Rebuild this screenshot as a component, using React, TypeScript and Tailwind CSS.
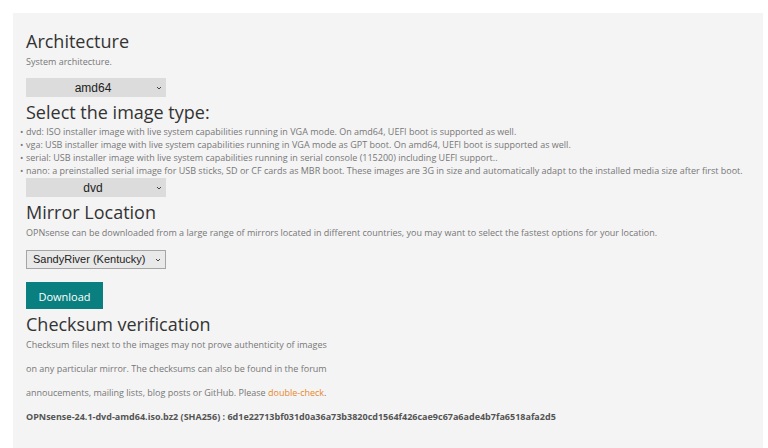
import React from "react";

const Chevron = () => (
  <svg width="8" height="8" viewBox="0 0 8 8" className="absolute right-[3px] top-1/2 -translate-y-1/2">
    <path d="M2 3 L4 5 L6 3" fill="none" stroke="#444" strokeWidth="1" />
  </svg>
);

const heading = "text-[18px] leading-[24px] text-[#333]";
const body = "text-[9px] leading-[14px] text-[#777]";

export default function App() {
  const items = [
    "dvd: ISO installer image with live system capabilities running in VGA mode. On amd64, UEFI boot is supported as well.",
    "vga: USB installer image with live system capabilities running in VGA mode as GPT boot. On amd64, UEFI boot is supported as well.",
    "serial: USB installer image with live system capabilities running in serial console (115200) including UEFI support..",
    "nano: a preinstalled serial image for USB sticks, SD or CF cards as MBR boot. These images are 3G in size and automatically adapt to the installed media size after first boot.",
  ];
  const arial = { fontFamily: '"Liberation Sans", Arial, sans-serif' };
  return (
    <div className="w-[768px] h-[448px] overflow-hidden bg-white pt-[13px] pl-[13px]" style={{ fontFamily: '"Open Sans", sans-serif' }}>
      <div className="w-[750px] h-[500px] bg-[#f4f4f4] px-[13px] pt-[16px]">
        <h2 className={heading}>Architecture</h2>
        <p className={`${body} mt-[2px]`}>System architecture.</p>
        <div className="relative mt-[9px] w-[140px] h-[19px] bg-[#dcdcdc] flex items-center justify-center text-[12px] text-[#222] pr-[6px]" style={arial}>
          amd64
          <Chevron />
        </div>
        <h2 className={`${heading} mt-[3px]`}>Select the image type:</h2>
        <ul className="-ml-[6px] mt-[1px]">
          {items.map((t) => (
            <li key={t} className="text-[9px] leading-[13px] text-[#777] flex">
              <span className="w-[6px] shrink-0">•</span>
              <span>{t}</span>
            </li>
          ))}
        </ul>
        <div className="relative mt-[1px] w-[140px] h-[19px] bg-[#dcdcdc] flex items-center justify-center text-[12px] text-[#222] pr-[6px]" style={arial}>
          dvd
          <Chevron />
        </div>
        <h2 className={`${heading} mt-[3px]`}>Mirror Location</h2>
        <p className={`${body} mt-[2px]`}>OPNsense can be downloaded from a large range of mirrors located in different countries, you may want to select the fastest options for your location.</p>
        <div className="relative mt-[10px] w-[140px] h-[19px] bg-[#e9e9e9] border border-[#a5a5a5] flex items-center pl-[6px] text-[11px] text-[#222]" style={arial}>
          SandyRiver (Kentucky)
          <Chevron />
        </div>
        <button className="mt-[13px] w-[77px] h-[27px] bg-[#0a7f80] text-white text-[11px] leading-[14px] pt-[2px] flex items-center justify-center">Download</button>
        <h2 className={`${heading} mt-[3px]`}>Checksum verification</h2>
        <p className={`${body} mt-[2px]`}>Checksum files next to the images may not prove authenticity of images</p>
        <p className={`${body} mt-[10px]`}>on any particular mirror. The checksums can also be found in the forum</p>
        <p className={`${body} mt-[10px]`}>
          annoucements, mailing lists, blog posts or GitHub. Please <span className="text-[#e8872d]">double-check</span>.
        </p>
        <p className="text-[9px] leading-[14px] text-[#555] font-bold mt-[10px]">OPNsense-24.1-dvd-amd64.iso.bz2 (SHA256) : 6d1e22713bf031d0a36a73b3820cd1564f426cae9c67a6ade4b7fa6518afa2d5</p>
      </div>
    </div>
  );
}
